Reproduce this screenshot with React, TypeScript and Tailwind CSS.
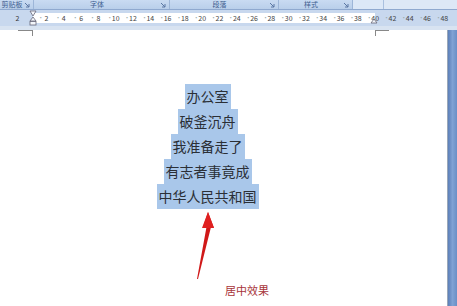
import React from 'react';

const lines = ['办公室', '破釜沉舟', '我准备走了', '有志者事竟成', '中华人民共和国'];
const rulerNums = [2, 4, 6, 8, 10, 12, 14, 16, 18, 20, 22, 24, 26, 28, 30, 32, 34, 36, 38, 40, 42, 44, 46, 48];

const Launcher: React.FC = () => (
  <svg width="6" height="6" viewBox="0 0 6 6" className="shrink-0">
    <path d="M1 1 L5 5 M5 2 L5 5 L2 5" stroke="#5a77a3" strokeWidth="1" fill="none" />
  </svg>
);

const Group: React.FC<{ label: string; width: string }> = ({ label, width }) => (
  <div className={`${width} h-full flex items-center border-r border-[#9db6d8] pr-[3px] bg-gradient-to-b from-[#c9dbf2] to-[#b9cfea]`}>
    <span className="flex-1 text-center text-[7px] leading-[9px] text-[#3e5e8f]">{label}</span>
    <Launcher />
  </div>
);

const App: React.FC = () => {
  return (
    <div
      className="w-[457px] h-[306px] overflow-hidden bg-[#d8e3f1] flex flex-col"
      style={{ fontFamily: '"Noto Sans CJK SC", "Noto Sans", sans-serif' }}
    >
      {/* ribbon group labels */}
      <div className="h-[10px] flex border-b border-[#8fa9cf] bg-[#d3e2f5] overflow-hidden">
        <Group label="剪贴板" width="w-[34px]" />
        <Group label="字体" width="w-[136px]" />
        <Group label="段落" width="w-[109px]" />
        <Group label="样式" width="w-[74px]" />
        <div className="w-[31px] h-full border-r border-[#a9c0df] bg-[#dce8f7]" />
        <div className="flex-1 h-full bg-[#dde8f6]" />
      </div>

      {/* ruler */}
      <div className="h-[16px] flex items-stretch bg-[#c8d8ee] relative">
        <div className="w-[33px] flex items-center justify-center text-[7px] text-[#333] pl-[2px]">2</div>
        <div className="flex-1 flex items-center my-[3px] relative">
          <div className="absolute left-0 top-0 bottom-0 w-[342px] bg-white" />
          {rulerNums.map((n) => (
            <div key={n} className="relative w-[17.3px] shrink-0 h-full flex items-center">
              <span className="w-[8px] text-center text-[6px] text-[#9aa] ml-[4.6px] leading-none">·</span>
              <span className="w-[10px] text-center text-[7px] leading-none text-[#444] -ml-[1px]">{n}</span>
            </div>
          ))}
        </div>
        {/* indent markers */}
        <svg width="8" height="16" viewBox="0 0 8 16" className="absolute left-[29px] top-0">
          <path d="M1 1 H7 L4 6 Z" fill="#f3f6fb" stroke="#667" strokeWidth="0.8" />
          <path d="M4 7 L1 11 H7 Z" fill="#f3f6fb" stroke="#667" strokeWidth="0.8" />
          <rect x="1" y="11.5" width="6" height="3.5" fill="#f3f6fb" stroke="#667" strokeWidth="0.8" />
        </svg>
        <svg width="8" height="16" viewBox="0 0 8 16" className="absolute left-[370px] top-0">
          <path d="M4 9 L1 13 H7 Z" fill="#f3f6fb" stroke="#667" strokeWidth="0.8" />
        </svg>
      </div>

      <div className="h-[4px]" />

      {/* page area */}
      <div className="flex-1 flex">
        <div className="w-[448px] bg-white border-r border-[#9aa7b8] relative flex flex-col items-start">
          {/* crop marks */}
          <div className="absolute left-[18px] top-0 w-[15px] h-[6px] border-t border-r border-[#888]" />
          <div className="absolute left-[375px] top-0 w-[14px] h-[6px] border-t border-l border-[#888]" />

          <div className="w-[415px] mt-[54px] flex flex-col items-center">
            {lines.map((t) => (
              <div
                key={t}
                className="h-[25px] leading-[25px] px-[2px] bg-[#a9c7ea] text-[14px] text-[#2b2f36]"
              >
                {t}
              </div>
            ))}
          </div>

          <svg width="24" height="70" viewBox="0 0 24 70" className="ml-[190px] mt-[2px]">
            <path d="M18 1 L13 16 L16.5 16 L7 68 L8 68 L21 16 L24 17 Z" fill="#d01818" />
            <path d="M18 1 L12 17 L24 17 Z" fill="#e02020" />
          </svg>

          <div className="ml-[225px] mt-[4px] text-[11px] leading-none text-[#a8353a]">居中效果</div>
        </div>
        <div className="flex-1 bg-gradient-to-r from-[#5c7fb8] via-[#7fa2d4] to-[#6a8fc6]" />
      </div>
    </div>
  );
};

export default App;
